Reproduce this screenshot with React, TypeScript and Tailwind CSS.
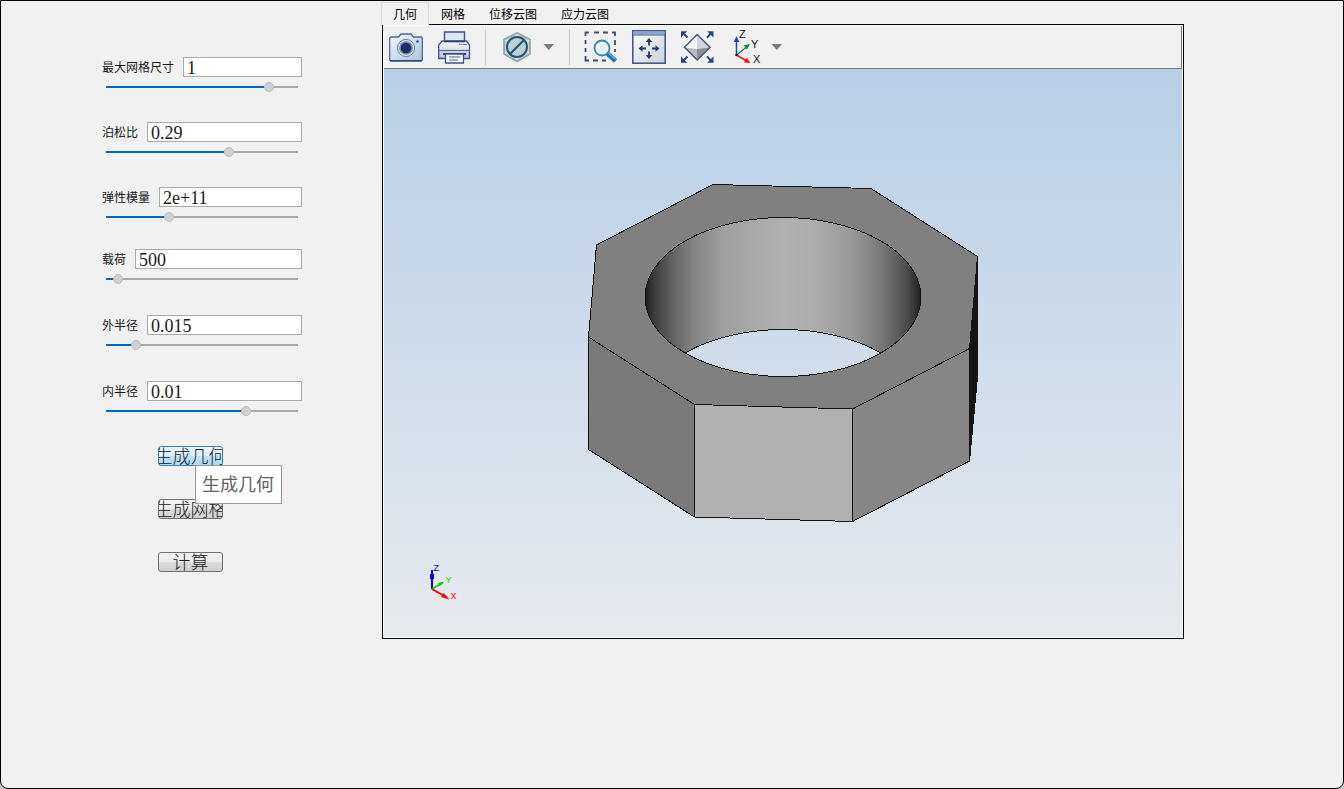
import { useState } from 'react';
import type { ReactNode } from 'react';

interface Field {
  id: string;
  label: string;
  value: string;
  position: number;
}

const materialFields: Field[] = [
  { id: 'mesh-size', label: '最大网格尺寸', value: '1', position: 87 },
  { id: 'poisson', label: '泊松比', value: '0.29', position: 65 },
  { id: 'modulus', label: '弹性模量', value: '2e+11', position: 32 },
];

const geometryFields: Field[] = [
  { id: 'load', label: '载荷', value: '500', position: 4 },
  { id: 'outer-radius', label: '外半径', value: '0.015', position: 14 },
  { id: 'inner-radius', label: '内半径', value: '0.01', position: 74 },
];

const tabs = ['几何', '网格', '位移云图', '应力云图'];

const ParameterField = ({ field }: { field: Field }) => {
  const [value, setValue] = useState(field.value);
  const [position, setPosition] = useState(field.position);

  return (
    <div className="flex flex-col gap-[5px]">
      <div className="flex h-5 items-center gap-[9px]">
        <label htmlFor={field.id} className="shrink-0 text-[12px] leading-5 text-[#1a1a1a]">
          {field.label}
        </label>
        <input
          id={field.id}
          type="text"
          value={value}
          onChange={(e) => setValue(e.target.value)}
          className="h-5 w-full min-w-0 border border-[#ababab] bg-white px-[3px] pt-[2px] font-['Liberation_Serif',serif] text-[18px] leading-[16px] text-[#1a1a1a] outline-none"
        />
      </div>
      <input
        type="range"
        aria-label={field.label}
        min={0}
        max={100}
        value={position}
        onChange={(e) => setPosition(Number(e.target.value))}
        style={{
          backgroundImage: `linear-gradient(to right, #0067c0 ${position}%, #a9a9a9 ${position}%)`,
        }}
        className="mx-1 block h-[10px] appearance-none bg-[length:100%_2px] bg-center bg-no-repeat outline-none [&::-webkit-slider-thumb]:h-[10px] [&::-webkit-slider-thumb]:w-[10px] [&::-webkit-slider-thumb]:appearance-none [&::-webkit-slider-thumb]:rounded-full [&::-webkit-slider-thumb]:border [&::-webkit-slider-thumb]:border-[#bdbdbd] [&::-webkit-slider-thumb]:bg-[#d0d0d0]"
      />
    </div>
  );
};

const ActionButton = ({ children, highlighted = false }: { children: ReactNode; highlighted?: boolean }) => (
  <button
    type="button"
    className={`flex h-5 w-[65px] items-center justify-center overflow-x-clip whitespace-nowrap rounded-[3px] border pb-[3px] text-[18px] font-light leading-[18px] text-[#222222] ${
      highlighted
        ? 'border-[#3c7fb1] bg-[linear-gradient(#eaf6fd,#d9f0fc_50%,#bee6fd_50%,#a7d9f5)]'
        : 'border-[#707070] bg-[linear-gradient(#f2f2f2,#ebebeb_50%,#dddddd_50%,#cfcfcf)]'
    }`}
  >
    <span className="shrink-0">{children}</span>
  </button>
);

const ToolButton = ({ label, children }: { label: string; children: ReactNode }) => (
  <button type="button" aria-label={label} className="h-[34px] w-[34px] shrink-0">
    <svg viewBox="0 0 34 34" className="h-full w-full overflow-visible" fill="none">
      {children}
    </svg>
  </button>
);

const CaretButton = ({ label }: { label: string }) => (
  <button type="button" aria-label={label} className="h-[34px] w-3 shrink-0">
    <svg viewBox="0 0 12 34" className="h-full w-full">
      <path d="M0.5 14H11L5.8 20Z" fill="#7c7c7c" />
    </svg>
  </button>
);

const Separator = () => <div className="h-9 w-px shrink-0 bg-[#cbcbcb]" />;

const Toolbar = () => (
  <div className="flex h-[43px] items-center gap-[14px] border-r border-b border-[#7a7a7a] bg-[#f1f1f1] pl-[5px]">
    <ToolButton label="截图">
      <defs>
        <linearGradient id="camera-body" x1="0" y1="0" x2="1" y2="1">
          <stop offset="0" stopColor="#f6fafd" />
          <stop offset="1" stopColor="#a9c3df" />
        </linearGradient>
      </defs>
      <path
        d="M2 7H9.500L12 4H22L24.500 7H32Q33.3 7 33.3 8.500V29.500Q33.3 31 32 31H2Q0.700 31 0.700 29.500V8.500Q0.700 7 2 7Z"
        fill="url(#camera-body)"
        stroke="#4a679a"
        strokeWidth="1.3"
      />
      <path d="M1 30.700H33" stroke="#2e4677" strokeWidth="1.2" />
      <circle cx="17" cy="18" r="8.600" fill="#d3e0ee" stroke="#7188aa" strokeWidth="1" />
      <circle cx="17" cy="18" r="6.800" fill="#7488ac" />
      <circle cx="17" cy="18" r="5.200" fill="#1d2f62" />
      <circle cx="28.500" cy="11.500" r="1.300" fill="#38527f" />
    </ToolButton>
    <ToolButton label="打印">
      <defs>
        <linearGradient id="printer-body" x1="0" y1="0" x2="0" y2="1">
          <stop offset="0" stopColor="#fbfcfd" />
          <stop offset="1" stopColor="#b8c2d2" />
        </linearGradient>
      </defs>
      <path d="M7.500 13V2H27.500V13" fill="#dfe7f4" stroke="#3d5588" strokeWidth="1.4" />
      <path d="M5 11H29.500L32.500 15V28.500H1.700V15Z" fill="url(#printer-body)" stroke="#3d5588" strokeWidth="1.3" />
      <path d="M7 11.500H28" stroke="#263d70" strokeWidth="1.6" />
      <path d="M22 14.500H25M26 14.500H30" stroke="#6b82ab" strokeWidth="1.200" />
      <path d="M2 20.500H32.500" stroke="#5c7199" strokeWidth="1.200" />
      <path d="M6 24H29" stroke="#263d70" strokeWidth="2" />
      <path d="M8.500 24H26.500V33H8.500Z" fill="#f7f9fc" stroke="#3d5588" strokeWidth="1.300" />
      <path d="M12 27H23.500M12 30H21" stroke="#4a6292" strokeWidth="1.200" />
    </ToolButton>
    <Separator />
    <div className="flex gap-[9px]">
      <ToolButton label="显示模式">
        <path d="M17 2.800L30 9.500V24L17 31.500L4 24V9.500Z" fill="#c3d1d4" stroke="#8aa5ac" strokeWidth="1.600" />
        <path d="M17 4L17 8M5 10L9 12M29 10L25 12M5 23L9 21M29 23L25 21M17 30V26" stroke="#e4edee" strokeWidth="1" />
        <circle cx="17" cy="17" r="10" fill="#bad0d9" stroke="#285867" strokeWidth="2" />
        <path d="M10.500 23.500L23.500 10.500" stroke="#285867" strokeWidth="2.200" />
      </ToolButton>
      <CaretButton label="更多显示模式" />
    </div>
    <Separator />
    <ToolButton label="框选缩放">
      <path
        d="M1.500 6V2.500H5M10 2.500H15M19 2.500H24M28 2.500H31V6M31 10V15M31 19V22M1.500 10V14M1.500 18V22M1.500 26V30.500H5M9 30.500H14M18 30.500H22"
        stroke="#3a4f80"
        strokeWidth="1.800"
      />
      <circle cx="18" cy="18" r="7.500" fill="#e4f1f6" stroke="#3b86ac" strokeWidth="1.800" />
      <path d="M13.500 17.500Q14.500 13.500 18.500 13" stroke="#ffffff" strokeWidth="1.600" />
      <path d="M23.500 23.500L31.500 31" stroke="#1c74bd" strokeWidth="4.600" />
      <path d="M24.500 23L31 29" stroke="#69b3e4" strokeWidth="1.200" />
    </ToolButton>
    <ToolButton label="适应窗口">
      <defs>
        <linearGradient id="fit-window" x1="0" y1="0" x2="1" y2="1">
          <stop offset="0" stopColor="#ffffff" />
          <stop offset="1" stopColor="#c9cfda" />
        </linearGradient>
      </defs>
      <rect x="0.800" y="0.800" width="32.400" height="32.400" fill="url(#fit-window)" stroke="#435a8c" strokeWidth="1.600" />
      <path d="M1.500 3H32.500" stroke="#8aa4cd" strokeWidth="3" />
      <path d="M1 5H33" stroke="#435a8c" strokeWidth="1" />
      <path d="M17 10V15.500M17 21.500V27M8 18.500H14M20 18.500H26" stroke="#243868" strokeWidth="1.800" />
      <path
        d="M17 8L20.300 12H13.700ZM17 29L20.300 25H13.700ZM6.500 18.500L10.500 15.200V21.800ZM27.500 18.500L23.500 15.200V21.800Z"
        fill="#243868"
      />
    </ToolButton>
    <ToolButton label="居中视图">
      <path d="M17 4.500V19L4.500 17.500Z" fill="#f7f8f8" />
      <path d="M17 4.500L30 17.500L17 19Z" fill="#d2d6dc" />
      <path d="M4.500 17.500L17 19V30Z" fill="#b8bcc1" />
      <path d="M17 19L30 17.500L17 30Z" fill="#8b919c" />
      <path d="M17.200 4.500L30 17.300L17.200 30L4.500 17.300Z" stroke="#485876" strokeWidth="1.500" />
      <path d="M3 3L7.500 7.500M31.500 3L27 7.500M3 31L7.500 26.500M31.500 31L27 26.500" stroke="#2c447b" strokeWidth="2" />
      <path
        d="M1 1.300H7.300L1 7.600ZM33.500 1.300V7.600L27.200 1.300ZM1 32.700V26.400L7.300 32.700ZM33.500 32.700H27.200L33.500 26.400Z"
        fill="#2c447b"
      />
    </ToolButton>
    <div className="flex gap-[9px]">
      <ToolButton label="坐标视角">
        <path d="M8.500 25V10" stroke="#2149a8" strokeWidth="1.500" />
        <path d="M8.500 6L11.300 12H5.700Z" fill="#2149a8" />
        <path d="M8.500 25L18 17.500" stroke="#178a41" strokeWidth="1.500" />
        <path d="M22 14L19 19.500L15.600 15.200Z" fill="#178a41" />
        <path d="M8.500 25L18 30.500" stroke="#f01414" strokeWidth="1.500" />
        <path d="M22.500 33L16 32.500L18.700 27.800Z" fill="#f01414" />
        <circle cx="8.500" cy="25" r="1.200" fill="#111111" />
        <g fill="#111111" fontFamily="Liberation Sans, sans-serif" fontSize="11">
          <text x="11" y="8">Z</text>
          <text x="23" y="18">Y</text>
          <text x="25" y="33">X</text>
        </g>
      </ToolButton>
      <CaretButton label="更多视角" />
    </div>
  </div>
);

// Octagonal ring with a round bore, plus the small axis triad
const Viewport = () => (
  <svg viewBox="384 69 798 568" className="block h-auto w-full bg-[linear-gradient(#b9cee5,#e7eaee)]" role="img" aria-label="几何模型">
    <defs>
      <linearGradient id="bore" x1="0" y1="0" x2="1" y2="0">
        <stop offset="0" stopColor="#1c1c1c" />
        <stop offset="0.04" stopColor="#404040" />
        <stop offset="0.1" stopColor="#626262" />
        <stop offset="0.17" stopColor="#818181" />
        <stop offset="0.28" stopColor="#9f9f9f" />
        <stop offset="0.5" stopColor="#b1b1b1" />
        <stop offset="0.62" stopColor="#acacac" />
        <stop offset="0.75" stopColor="#989898" />
        <stop offset="0.86" stopColor="#777777" />
        <stop offset="0.95" stopColor="#4b4b4b" />
        <stop offset="1" stopColor="#202020" />
      </linearGradient>
      <linearGradient id="backdrop" gradientUnits="userSpaceOnUse" x1="0" y1="69" x2="0" y2="637">
        <stop offset="0" stopColor="#b9cee5" />
        <stop offset="1" stopColor="#e7eaee" />
      </linearGradient>
      <clipPath id="bore-clip">
        <ellipse cx="783" cy="297" rx="138" ry="79.500" />
      </clipPath>
    </defs>
    <g stroke="#141414" strokeWidth="1" strokeLinejoin="round" shapeRendering="crispEdges">
      <path d="M588.500 337L694.500 404.500V517L588.500 449.500Z" fill="#7a7a7a" />
      <path d="M694.500 404.500L852.500 409V521.500L694.500 517Z" fill="#b1b1b1" />
      <path d="M852.500 409L969.500 348.500V461L852.500 521.500Z" fill="#868686" />
      <path d="M969.500 348.500L977.500 256.500V377L969.500 461Z" fill="#141414" />
      <path
        d="M713 184.500L871 188.500L977.500 256.500L969.500 348.500L852.500 409L694.500 404.500L588.500 337L596.500 245Z"
        fill="#808080"
      />
      <ellipse cx="783" cy="297" rx="138" ry="79.500" fill="url(#bore)" />
      <g clipPath="url(#bore-clip)">
        <ellipse cx="783" cy="409" rx="138" ry="79.500" fill="url(#backdrop)" />
      </g>
      <ellipse cx="783" cy="297" rx="138" ry="79.500" fill="none" />
    </g>
    <g fill="none" strokeWidth="2">
      <path d="M432 589V570" stroke="#0000ee" />
      <path d="M432 589L443 582.500" stroke="#00d800" />
      <path d="M432 589L447 597.500" stroke="#ff0000" />
    </g>
    <path d="M430 574H434V579H430Z" fill="#0000ee" />
    <path d="M444 581.500L440 586L438 583Z" fill="#00d800" />
    <path d="M449.500 599.500L441 597L443.500 593Z" fill="#ff0000" />
    <g fontFamily="Liberation Sans, sans-serif" fontSize="9">
      <text x="433.500" y="571" fill="#0000ee">Z</text>
      <text x="445.500" y="583" fill="#00d800">Y</text>
      <text x="450.500" y="599" fill="#ff0000">X</text>
    </g>
  </svg>
);

export default function App() {
  const [activeTab, setActiveTab] = useState(tabs[0]);

  return (
    <div className="min-h-screen bg-[#c4c4c4] font-['Noto_Sans_CJK_SC',sans-serif]">
      <div className="flex min-h-screen items-start rounded-b-lg border border-black bg-[#f1f1f1] pr-[159px]">
        <aside className="w-[381px] shrink-0 px-20 pt-14">
          <div className="ml-[21px] flex w-[200px] flex-col gap-[27px]">
            <div className="flex flex-col gap-[30px]">
              {materialFields.map((field) => (
                <ParameterField key={field.id} field={field} />
              ))}
            </div>
            <div className="flex flex-col gap-[31px]">
              {geometryFields.map((field) => (
                <ParameterField key={field.id} field={field} />
              ))}
            </div>
          </div>

          <div className="mt-[30px] ml-[77px] flex flex-col items-start gap-[33px]">
            <div className="relative">
              <ActionButton highlighted>生成几何</ActionButton>
              <div
                role="tooltip"
                className="absolute top-[19px] left-[37px] z-10 border border-[#999999] bg-white pt-0 pr-[7px] pb-[2px] pl-[6px] text-[18px] leading-[35px] whitespace-nowrap text-[#636363]"
              >
                生成几何
              </div>
            </div>
            <ActionButton>生成网格</ActionButton>
            <ActionButton>计算</ActionButton>
          </div>
        </aside>

        <main className="min-w-0 flex-1 pt-px">
          <div role="tablist" className="relative -mb-px -ml-px flex">
            {tabs.map((tab) => (
              <button
                key={tab}
                type="button"
                role="tab"
                aria-selected={tab === activeTab}
                onClick={() => setActiveTab(tab)}
                className={`h-[23px] border border-b-0 px-[11px] text-[12px] leading-[22px] text-black ${
                  tab === activeTab ? 'border-[#d9d9d9] bg-[#f1f1f1]' : 'border-transparent'
                }`}
              >
                {tab}
              </button>
            ))}
          </div>
          <section className="border border-black bg-white p-px">
            <Toolbar />
            <Viewport />
          </section>
        </main>
      </div>
    </div>
  );
}
